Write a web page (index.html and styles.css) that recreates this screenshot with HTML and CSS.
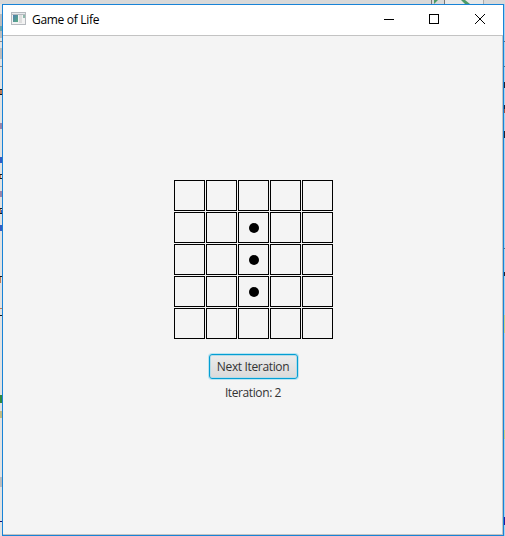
FILE: index.html
```html
<!DOCTYPE html>
<html lang="en">
<head>
<meta charset="utf-8">
<title>Game of Life</title>
<link rel="stylesheet" href="styles.css">
</head>
<body>
<svg class="desktop" width="505" height="536" shape-rendering="crispEdges" aria-hidden="true">
  <path fill="#d9d9d9" d="M0 0h505v4H0z"/>
  <path fill="#777" d="M431 0h1v4h-1zM444 0h1v4h-1z"/>
  <path fill="#e8e8e8" d="M445 0h38v4h-38z"/>
  <path fill="#aaa" d="M483 0h1v4h-1z"/>
  <path fill="#4c9a67" shape-rendering="auto" d="M434 0h4l-4 4zM461 0h4l5 4h-5z"/>
  <path fill="#e2e2e2" d="M0 4h2v532H0z"/>
  <path fill="#bcbcbc" d="M0 14h2v24H0zM0 48h2v11H0zM0 477h2v10H0z"/>
  <path fill="#888" d="M0 41h2v1H0zM0 66h2v1H0z"/>
  <path fill="#69a6b0" d="M0 26h2v5H0z"/>
  <path fill="#101820" d="M0 89h2v1H0zM0 94h2v1H0zM0 174h2v1H0zM0 178h2v1H0zM0 208h2v1H0zM0 213h2v1H0zM0 276h2v1H0zM0 315h2v1H0z"/>
  <path fill="#bd7b55" d="M0 90h2v4H0zM0 175h1v3H0zM0 209h1v4H0zM0 277h1v6H0zM0 308h2v1H0z"/>
  <path fill="#315dc4" d="M0 157h2v6H0zM1 210h1v3H1zM0 225h2v6H0z"/>
  <path fill="#9b85a8" d="M0 123h2v6H0zM0 191h2v6H0z"/>
  <path fill="#30883e" d="M0 395h2v8H0z"/>
  <path fill="#c2bb82" d="M0 411h2v7H0z"/>
  <path fill="#101070" d="M0 521h2v1H0z"/>
  <path fill="#a8d3f0" d="M504 4h1v532h-1z"/>
  <path fill="#526b80" d="M504 41h1v1h-1zM504 66h1v1h-1zM504 248h1v1h-1z"/>
  <path fill="#202030" d="M504 82h1v6h-1zM504 105h1v4h-1zM504 131h1v7h-1zM504 272h1v4h-1z"/>
  <path fill="#9b5147" d="M504 109h1v4h-1z"/>
  <path fill="#c2d38a" d="M504 315h1v18h-1zM504 430h1v9h-1z"/>
  <path fill="#29189b" d="M504 517h1v8h-1z"/>
</svg>
<main class="window">
  <header class="titlebar">
    <svg class="app-icon" width="15" height="13" viewBox="0 0 15 13" aria-hidden="true">
      <defs><linearGradient id="pane" x1="0" y1="0" x2="1" y2="1"><stop stop-color="#4f7fae"/><stop offset="1" stop-color="#5aad83"/></linearGradient></defs>
      <path fill="#b6babf" d="M0 0h15v13H0z"/>
      <path fill="#e9ebee" d="M1 1h13v1H1z"/>
      <path fill="#f3f3f3" d="M1 3h13v9H1z"/>
      <path fill="url(#pane)" d="M2 3h5v7H2z"/>
      <path fill="#dedede" d="M8 3h3v8H8z"/>
      <path fill="#8fb9ac" d="M12 3h2v3h-2z"/>
    </svg>
    <h1 class="title">Game of Life</h1>
    <svg class="controls" width="102" height="12" viewBox="0 0 102 12" fill="none" stroke="#000" aria-hidden="true">
      <path d="M0 6.500h10M45.500 1.500h9v9h-9z" shape-rendering="crispEdges"/>
      <path d="M91 1l10 10M101 1L91 11"/>
    </svg>
  </header>
  <section class="content">
    <div class="board">
      <i></i><i></i><i></i><i></i><i></i>
      <i></i><i></i><i class="alive"></i><i></i><i></i>
      <i></i><i></i><i class="alive"></i><i></i><i></i>
      <i></i><i></i><i class="alive"></i><i></i><i></i>
      <i></i><i></i><i></i><i></i><i></i>
    </div>
    <button class="next" type="button"><span>Next Iteration</span></button>
    <p class="count">Iteration: 2</p>
  </section>
</main>
</body>
</html>
```
FILE: styles.css
```css
* { box-sizing: border-box; }
body {
  margin: 0;
  width: 505px;
  height: 536px;
  overflow: hidden;
  padding: 4px 1px 0 2px;
  background: #e2e2e2;
  font-family: "Open Sans", "Noto Sans", sans-serif;
}
.desktop { position: absolute; left: 0; top: 0; z-index: -1; }
.window {
  width: 502px;
  height: 532px;
  border: 1px solid #1883d7;
  background: #f4f4f4;
  display: flex;
  flex-direction: column;
}
.titlebar {
  height: 31px;
  flex: none;
  background: #fff;
  border-bottom: 1px solid #c3c3c3;
  display: flex;
  align-items: center;
  padding: 0 17px 0 8px;
}
.app-icon { margin-bottom: 3px; }
.title {
  margin: 0 0 0 6px;
  font-size: 12px;
  font-weight: 400;
  line-height: 16px;
  letter-spacing: -0.3px;
  color: #000;
}
.controls { margin: 0 0 2px auto; }
.content {
  flex: 1;
  display: flex;
  flex-direction: column;
  align-items: center;
  padding-top: 144px;
  border: solid #c3c3c3;
  border-width: 0 1px 1px 0;
}
.board {
  display: grid;
  grid-template-columns: repeat(5, 31px);
  grid-auto-rows: 31px;
  gap: 1px;
  margin-left: 2px;
}
.board i {
  border: 1px solid #000;
  display: flex;
  align-items: center;
  justify-content: center;
}
.alive::after {
  content: "";
  width: 10px;
  height: 10px;
  margin: 1px 0 0 1px;
  border-radius: 50%;
  background: #000;
}
.next {
  width: 89px;
  height: 25px;
  margin: 15px 0 0 1px;
  padding: 0;
  border: 1px solid #039ed3;
  border-radius: 3px;
  box-shadow: 0 0 0 1px #b9e4f1, inset 0 0 0 1px #b5dbe8;
  background: linear-gradient(#ececec, #dadada);
  font: 12px/16px "Open Sans", "Noto Sans", sans-serif;
  letter-spacing: -0.35px;
  color: #333;
  white-space: nowrap;
}
.count {
  margin: 6px 0 0 1px;
  font-size: 12px;
  line-height: 16px;
  letter-spacing: -0.4px;
  color: #333;
}
```
